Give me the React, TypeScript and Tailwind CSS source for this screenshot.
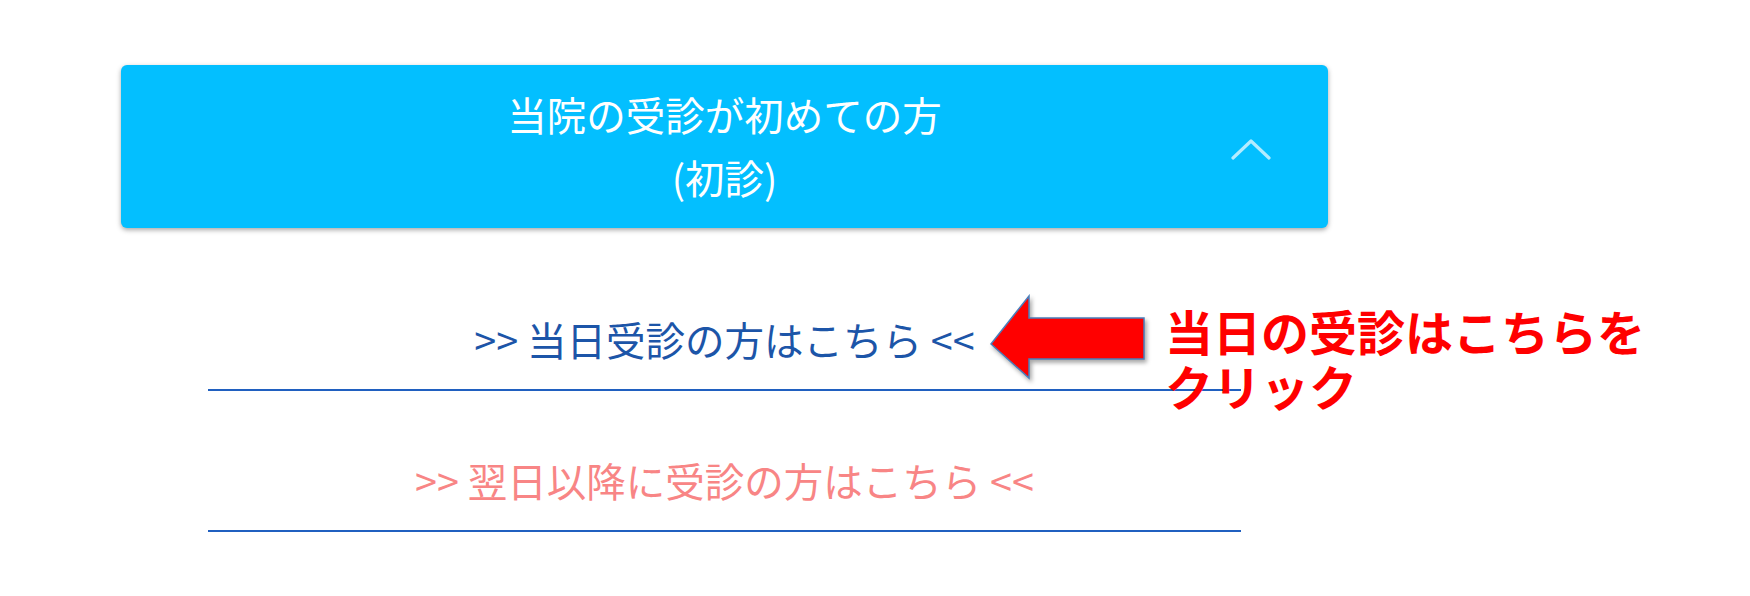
import React from "react";

const jp = { fontFamily: '"Noto Sans CJK JP", "Noto Sans", sans-serif' };

export default function App() {
  return (
    <div className="relative h-[596px] w-[1750px] overflow-hidden bg-white" style={jp}>
      <div className="ml-[121px] w-[1207px] pt-[65px]">
        <div className="relative flex h-[163px] flex-col items-center justify-center rounded-[6px] bg-[#03bfff] pb-[4px] text-white shadow-[0_2px_5px_rgba(0,0,0,0.35)]">
          <div className="text-[39.5px] leading-[63px]">当院の受診が初めての方</div>
          <div className="text-[39.5px] leading-[63px]">(初診)</div>
          <svg
            className="absolute left-[1110px] top-[72px]"
            width="40"
            height="24"
            viewBox="0 0 40 24"
            fill="none"
          >
            <polyline
              points="2,21 20,4 38,21"
              stroke="rgba(255,255,255,0.7)"
              strokeWidth="3.2"
              strokeLinecap="round"
              strokeLinejoin="round"
            />
          </svg>
        </div>

        <div className="mx-[87px] mt-[22px]">
          <div className="border-b-2 border-[#2060c0] pb-[26px] pt-[65px] text-center text-[39.5px] leading-[48px] text-[#1c55a8]">
            &gt;&gt; 当日受診の方はこちら &lt;&lt;
          </div>
          <div className="border-b-2 border-[#2060c0] pb-[26px] pt-[65px] text-center text-[39.5px] leading-[48px] text-[#f88585]">
            &gt;&gt; 翌日以降に受診の方はこちら &lt;&lt;
          </div>
        </div>
      </div>

      <svg
        className="absolute left-[989px] top-[294px]"
        width="160"
        height="90"
        viewBox="0 0 160 90"
        style={{ filter: "drop-shadow(2px 3px 2px rgba(0,0,0,0.35))" }}
      >
        <polygon
          points="2,50 40,2 40,24 155,24 155,65 40,65 40,84"
          fill="#ff0000"
          stroke="#4a7ebb"
          strokeWidth="1.5"
          strokeLinejoin="miter"
        />
      </svg>

      <div className="absolute left-[1165px] top-[303px] text-[48px] font-bold leading-[55px] text-[#ff0000]">
        <div>当日の受診はこちらを</div>
        <div>クリック</div>
      </div>
    </div>
  );
}
